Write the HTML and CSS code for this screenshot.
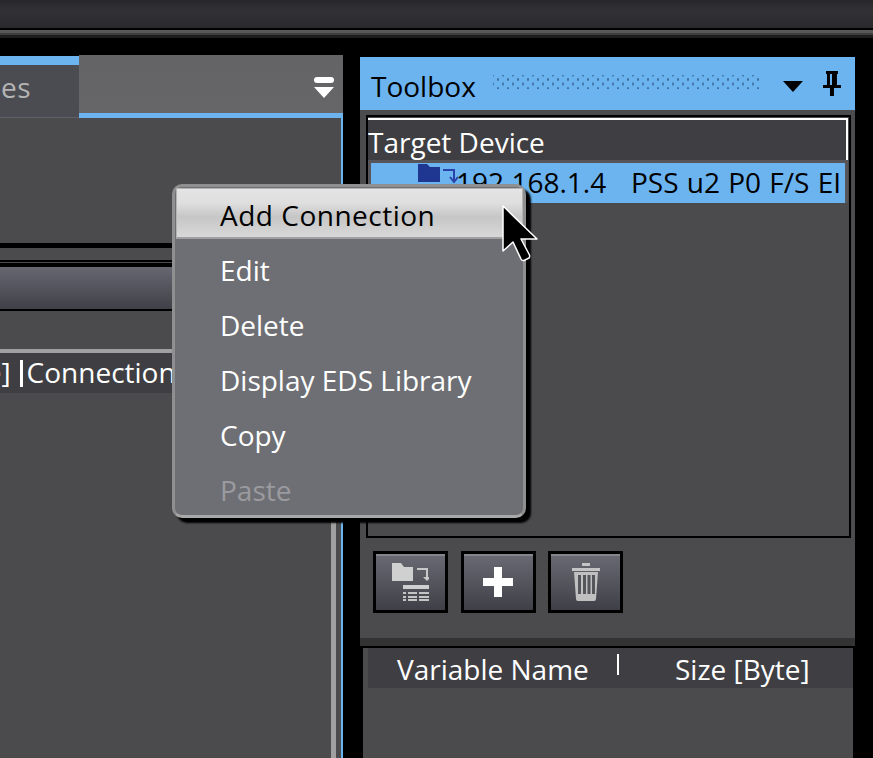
FILE: index.html
```html
<!DOCTYPE html>
<html lang="en">
<head>
<meta charset="utf-8">
<title>Toolbox</title>
<link rel="stylesheet" href="styles.css">
</head>
<body>
<div class="topbar"></div>
<div class="toprule"></div>
<main class="workspace">
  <section class="left">
    <div class="tabstrip">
      <div class="tab"><span class="tab-label">Variables</span></div>
      <div class="tabfill">
        <svg class="tabmenu" width="20" height="21" viewBox="0 0 20 21"><rect x="0" y="0" width="20" height="6" rx="3" fill="#fff"/><path d="M0 10h20L10 21z" fill="#fff"/></svg>
      </div>
    </div>
    <div class="leftbody"></div>
    <div class="leftlower">
      <div class="lowerhead-wrap"><div class="lowerhead"></div></div>
      <div class="lowergrid">
        <div class="gridcol">
          <div class="gridhead"><span class="gridtext">[Size]</span><span class="gridbar"></span><span class="gridname">Connection Name</span></div>
        </div>
        <div class="gridedge"></div>
      </div>
    </div>
  </section>

  <section class="right">
    <header class="titlebar">
      <span class="title">Toolbox</span>
      <span class="grip"></span>
      <svg class="drop" width="20" height="11" viewBox="0 0 20 11"><path d="M0 0h20L10 11z" fill="#000"/></svg>
      <svg class="pin" width="18" height="25" viewBox="0 0 18 25"><path d="M3 0h12v3h-1v11h4v3h-7v8H7v-8H0v-3h4V3H3zM7 3v11h2V3z" fill="#000" fill-rule="evenodd"/></svg>
    </header>
    <div class="treebox">
      <div class="treeframe">
        <div class="treehead">Target Device</div>
        <div class="treesep">
          <div class="treerow">
            <svg class="rowicon" width="42" height="38" viewBox="0 0 42 38"><path d="M0 0h9l3 3h10v15H0z" fill="#1f3791"/><path d="M25 6h11v11" fill="none" stroke="#2a43a8" stroke-width="2"/><path d="M32 13l4 5 4-5" fill="none" stroke="#2a43a8" stroke-width="2"/><path d="M12 21h25v5H12z" fill="#2a3f9c"/></svg>
            <span class="rowtext">192.168.1.4   PSS u2 P0 F/S EI</span>
          </div>
        </div>
      </div>
    </div>
    <div class="buttons">
      <button class="toolbtn" type="button" aria-label="Add folder">
        <svg width="37" height="38" viewBox="0 0 37 38"><path d="M0 0h9l3 4h9v14H0z" fill="#d0d0d0"/><path d="M25 6h10v9" fill="none" stroke="#c8c8c8" stroke-width="2"/><path d="M31 14h8l-4 4z" fill="#c8c8c8"/><path d="M11 22h26v4H11z" fill="#cfcfcf"/><path d="M11 29h3v2h-3zM16 29h9v2h-9zM27 29h10v2H27zM11 33h3v2h-3zM16 33h9v2h-9zM27 33h10v2H27zM11 36h3v2h-3zM16 36h9v2h-9zM27 36h10v2H27z" fill="#c4c4c4"/></svg>
      </button>
      <button class="toolbtn" type="button" aria-label="Add">
        <svg width="30" height="30" viewBox="0 0 30 30"><path d="M11 0h8v11h11v8H19v11h-8V19H0v-8h11z" fill="#fff"/></svg>
      </button>
      <button class="toolbtn" type="button" aria-label="Delete">
        <svg width="28" height="38" viewBox="0 0 28 38"><path d="M10 0h8v3h-8zM0 5h28v3H0z" fill="#c4c4c4"/><path d="M2 9h24l-2 27q0 2-2 2H6q-2 0-2-2z" fill="#c0c0c0"/><path d="M6 12h3v19H6zM11 12h3v19h-3zM15.500 12h3v19h-3zM20 12h3v19h-3z" fill="#55565c"/></svg>
      </button>
    </div>
    <div class="divider"></div>
    <div class="vars">
      <div class="varhead">
        <span class="varname">Variable Name</span>
        <span class="varsplit"></span>
        <span class="varsize">Size [Byte]</span>
      </div>
    </div>
  </section>
</main>

<ul class="menu">
  <li class="menuitem is-hover">Add Connection</li>
  <li class="menuitem">Edit</li>
  <li class="menuitem">Delete</li>
  <li class="menuitem">Display EDS Library</li>
  <li class="menuitem">Copy</li>
  <li class="menuitem is-disabled">Paste</li>
</ul>

<svg class="cursor" width="38" height="58" viewBox="0 0 38 58"><path d="M1 1V46L11 37L19 54Q20 56 22 55.500L27 53Q28 52 27.500 50L19 34H35z" fill="#000" stroke="#fff" stroke-width="1.500" stroke-linejoin="round"/></svg>
</body>
</html>
```
FILE: styles.css
```css
* { box-sizing: border-box; }
html, body { margin: 0; padding: 0; }
body {
  position: relative;
  width: 873px;
  height: 758px;
  overflow: hidden;
  background: #000;
  font-family: "Open Sans", "Noto Sans", sans-serif;
  font-size: 28px;
  color: #fff;
}
.topbar {
  height: 28px;
  background: linear-gradient(#27272a, #323236 40%, #2a2a2d);
}
.toprule {
  height: 8px;
  margin-top: 2px;
  background: linear-gradient(#585858 0, #585858 3px, #3e3e3e 3px, #3e3e3e 5px, #1c1c1c 5px, #1c1c1c 8px);
}
.workspace {
  display: flex;
  margin-top: 17px;
  height: 705px;
}
.left {
  width: 343px;
  display: flex;
  flex-direction: column;
}
.tabstrip { display: flex; height: 63px; }
.tab {
  width: 79px;
  overflow: hidden;
  display: flex;
  justify-content: flex-end;
  align-items: center;
  padding-right: 48px;
  margin-top: 1px;
  background: #4b4c52;
  border-top: 9px solid #6cb4f0;
  border-bottom: 1px solid #5d6068;
}
.tab-label {
  flex: none;
  color: #b4b4b4;
  white-space: nowrap;
  margin-top: -9px;
  letter-spacing: 0.4px;
}
.tabfill {
  flex: 1;
  display: flex;
  align-items: flex-start;
  justify-content: flex-end;
  padding: 22px 9px 0 0;
  background: linear-gradient(#646466, #666668);
  border-bottom: 5px solid #6cb4f0;
}
.leftbody {
  height: 125px;
  background: #4b4a4d;
  border-right: 2px solid #6cb4f0;
}
.leftlower {
  margin-top: 5px;
  flex: 1;
  background: #4b4a4d;
  border-right: 2px solid #6cb4f0;
  display: flex;
  flex-direction: column;
}
.lowerhead-wrap {
  margin-top: 12px;
  height: 51px;
  border-top: 2px solid #000;
  padding-top: 1px;
}
.lowerhead {
  height: 48px;
  border-top: 4px solid #000;
  border-bottom: 2px solid #000;
  background: linear-gradient(#666770, #404148);
}
.lowergrid {
  flex: 1;
  display: flex;
  margin-top: 38px;
  padding-right: 5px;
}
.gridcol {
  flex: 1;
  border-top: 4px solid #a0a0a0;
}
.gridhead {
  height: 40px;
  background: #3e3e43;
  overflow: hidden;
  display: flex;
  align-items: center;
  white-space: nowrap;
}
.gridtext { margin: -3px 0 0 -59px; flex: none; }
.gridbar {
  flex: none;
  width: 3px;
  height: 27px;
  margin: 0 4px 0 9px;
  background: #fff;
}
.gridname { flex: none; margin-top: -3px; }
.gridedge {
  width: 5px;
  background: #a0a0a0;
}
.right {
  margin-left: 17px;
  width: 495px;
  margin-top: 2px;
  display: flex;
  flex-direction: column;
  background: #4b4a4d;
}
.titlebar {
  height: 53px;
  display: flex;
  align-items: center;
  padding: 4px 14px 0 11px;
  background: #6cb4f0;
  color: #000;
}
.title { width: 122px; flex: none; }
.grip {
  width: 268px;
  height: 14px;
  margin-top: -8px;
  background-image:
    radial-gradient(circle, #3f6f9e 1px, transparent 1.4px),
    radial-gradient(circle, #3f6f9e 1px, transparent 1.4px);
  background-size: 10px 9px;
  background-position: 0 0, 5px 4.5px;
}
.drop { margin: 2px 0 0 23px; }
.pin { margin: -4px 0 0 20px; }
.treebox {
  margin: 5px 4px 0 6px;
  height: 423px;
  border: 2px solid #000;
  padding: 1px 1px 0 0;
  background: #4b4a4d;
}
.treeframe {
  height: 85px;
  border: solid #fff;
  border-width: 2px 2px 0 0;
  background: #3e3e43;
}
.treehead {
  height: 40px;
  line-height: 44px;
  white-space: nowrap;
}
.treesep {
  height: 43px;
  padding: 3px 0 0 3px;
  margin-right: -2px;
  background: #55555a;
}
.treerow {
  height: 40px;
  margin-right: 3px;
  display: flex;
  align-items: flex-start;
  padding-left: 47px;
  background: #6cb4f0;
  color: #000;
  overflow: hidden;
  white-space: pre;
  line-height: 38px;
}
.rowicon { flex: none; margin-top: 1px; }
.rowtext { margin-left: -4px; word-spacing: 1px; }
.buttons {
  display: flex;
  gap: 12.5px;
  margin: 13px 0 0 13px;
  height: 62px;
}
.toolbtn {
  width: 75px;
  height: 62px;
  padding: 0;
  display: flex;
  align-items: center;
  justify-content: center;
  border: 3px solid #000;
  box-shadow: inset 0 2px 0 #85868c;
  background: linear-gradient(#696a73, #3f4047);
}
.divider {
  margin-top: 25px;
  height: 8px;
  background: #333;
}
.vars {
  flex: 1;
  border-top: 2px solid #000;
  border-left: 3px solid #000;
  border-right: 2px solid #000;
  background: #4b4a4d;
}
.varhead {
  margin-left: 5px;
  height: 40px;
  display: flex;
  align-items: center;
  background: #3e3e43;
  white-space: nowrap;
}
.varname { margin: 2px 0 0 29px; width: 220px; flex: none; }
.varsplit {
  flex: none;
  width: 2px;
  height: 21px;
  margin-top: -8px;
  background: #fff;
}
.varsize { margin: 2px 0 0 56px; }
.menu {
  position: absolute;
  left: 172px;
  top: 184px;
  width: 354px;
  height: 334px;
  margin: 0;
  padding: 1px 0 0 1px;
  list-style: none;
  background: #6e6f74;
  border: 3px solid #8f8f90;
  border-bottom-color: #a8a8a8;
  border-radius: 10px;
  box-shadow: 5px 5px 2px #000;
}
.menuitem {
  height: 55px;
  line-height: 53px;
  padding-left: 44px;
}
.menuitem.is-hover {
  height: 51px;
  line-height: 52px;
  margin-bottom: 5px;
  color: #000;
  letter-spacing: 0.5px;
  border: 1px solid #b4b4b4;
  border-bottom: 2px solid #a0a0a0;
  padding-left: 43px;
  background: linear-gradient(#e4e4e4, #dedede 30%, #c6c6c6 58%, #d8d8d8);
}
.menuitem.is-disabled { color: #9b9b9f; }
.cursor {
  position: absolute;
  left: 502px;
  top: 205px;
}
```
